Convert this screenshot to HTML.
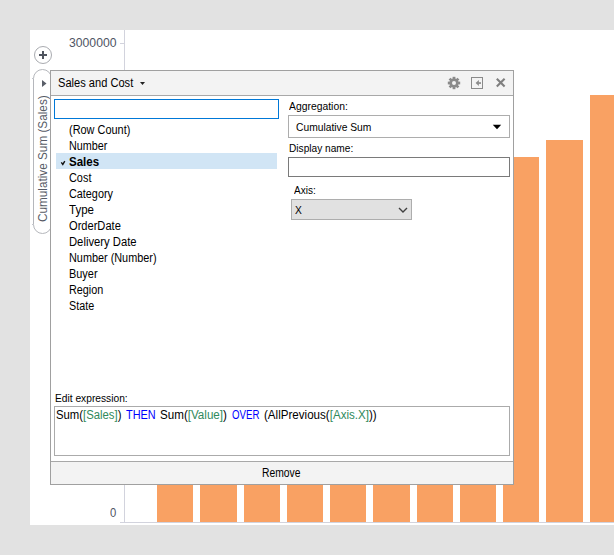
<!DOCTYPE html>
<html><head><meta charset="utf-8">
<style>
*{margin:0;padding:0;box-sizing:border-box}
html,body{width:614px;height:555px;overflow:hidden;background:#e2e2e2;font-family:"Liberation Sans",sans-serif}
.a{position:absolute}
.t{position:absolute;white-space:pre;line-height:1;transform-origin:0 0}
.bar{position:absolute;background:#f9a163;width:36px}
</style></head><body>
<div class="a" style="left:30px;top:30px;width:584px;height:495px;background:#fff"></div>
<div class="a" style="left:124px;top:30px;width:1px;height:493px;background:#d2d3dd"></div>
<div class="a" style="left:120px;top:522px;width:494px;height:1px;background:#d2d3dd"></div>
<div class="a" style="left:120px;top:43px;width:4px;height:1px;background:#d2d3dd"></div>
<div class="t" style="left:68.5px;top:37px;font-size:12.5px;color:#4f5564;transform:scaleX(0.9755);">3000000</div>
<div class="t" style="left:110.4px;top:507px;font-size:12.5px;color:#4f5564;transform:scaleX(0.9);">0</div>
<div class="bar" style="left:157px;top:300px;width:36px;height:222px"></div>
<div class="bar" style="left:200px;top:300px;width:37px;height:222px"></div>
<div class="bar" style="left:244px;top:300px;width:36px;height:222px"></div>
<div class="bar" style="left:287px;top:300px;width:36px;height:222px"></div>
<div class="bar" style="left:330px;top:300px;width:36px;height:222px"></div>
<div class="bar" style="left:373px;top:300px;width:37px;height:222px"></div>
<div class="bar" style="left:417px;top:300px;width:36px;height:222px"></div>
<div class="bar" style="left:460px;top:300px;width:36px;height:222px"></div>
<div class="bar" style="left:503px;top:157px;width:36px;height:365px"></div>
<div class="bar" style="left:546px;top:140px;width:37px;height:382px"></div>
<div class="bar" style="left:590px;top:95px;width:36px;height:427px"></div>
<div class="a" style="left:34px;top:46px;width:18px;height:18px;border:1px solid #a9abb0;border-radius:50%"></div>
<div class="a" style="left:39px;top:54px;width:8px;height:2px;background:#50555f"></div>
<div class="a" style="left:42px;top:51px;width:2px;height:8px;background:#50555f"></div>
<div class="a" style="left:33px;top:69px;width:19px;height:165px;border:1px solid #b5b7bc;border-radius:9.5px"></div>
<div class="a" style="left:32px;top:78px;width:2px;height:1px;background:#c5c7cc"></div>
<div class="a" style="left:32px;top:224px;width:2px;height:1px;background:#c5c7cc"></div>
<svg class="a" style="left:40px;top:78px" width="10" height="12"><path d="M2 2 L6.5 5.5 L2 9 Z" fill="#5a5f69"/></svg>
<div class="t" style="left:37px;top:222px;font-size:12.5px;color:#575b66;transform:rotate(-90deg) scaleX(0.94)">Cumulative Sum (Sales)</div>
<div class="a" style="left:50px;top:70px;width:464px;height:415px;border:1px solid #a0a0a0;background:#fff"></div>
<div class="a" style="left:51px;top:71px;width:462px;height:25px;background:#f3f3f3;border-bottom:1px solid #a8a8a8"></div>
<div class="t" style="left:58.3px;top:77px;font-size:12px;color:#000;transform:scaleX(0.9244);">Sales and Cost</div>
<svg class="a" style="left:138px;top:80px" width="10" height="8"><path d="M2 2 L7 2 L4.5 5 Z" fill="#222"/></svg>
<svg class="a" style="left:446px;top:75px" width="16" height="16" viewBox="0 0 16 16"><g fill="#8a8a8a"><circle cx="8" cy="8" r="4.6"/><rect x="6.6" y="1.8" width="2.8" height="12.4"/><rect x="6.6" y="1.8" width="2.8" height="12.4" transform="rotate(45 8 8)"/><rect x="6.6" y="1.8" width="2.8" height="12.4" transform="rotate(90 8 8)"/><rect x="6.6" y="1.8" width="2.8" height="12.4" transform="rotate(135 8 8)"/></g><circle cx="8" cy="8" r="2" fill="#f3f3f3"/></svg>
<div class="a" style="left:471px;top:77px;width:12px;height:12px;border:1px solid #8a8a8a"></div>
<svg class="a" style="left:471px;top:77px" width="12" height="12"><path d="M4.6 6 L7.9 2.9 L7.9 9.1 Z" fill="#8a8a8a"/><rect x="7.4" y="5.2" width="2.6" height="1.7" fill="#8a8a8a"/></svg>
<svg class="a" style="left:494px;top:76px" width="14" height="14"><path d="M2.8 2.8 L10.6 10.6 M10.6 2.8 L2.8 10.6" stroke="#7f7f7f" stroke-width="2.1"/></svg>
<div class="a" style="left:54px;top:99px;width:225px;height:20px;border:1px solid #0078d7"></div>
<div class="a" style="left:56px;top:153px;width:221px;height:16px;background:#d1e5f5"></div>
<svg class="a" style="left:59px;top:159px" width="8" height="8"><path d="M2.3 3.4 L3.8 5.4 L5.8 2.2" stroke="#111" stroke-width="1.4" fill="none"/></svg>
<div class="t" style="left:69.2px;top:124px;font-size:12px;color:#000;transform:scaleX(0.9104);">(Row Count)</div>
<div class="t" style="left:69.2px;top:140px;font-size:12px;color:#000;transform:scaleX(0.8977);">Number</div>
<div class="t" style="left:69.2px;top:156px;font-size:12px;color:#000;transform:scaleX(0.9613);font-weight:bold;">Sales</div>
<div class="t" style="left:69.2px;top:172px;font-size:12px;color:#000;transform:scaleX(0.908);">Cost</div>
<div class="t" style="left:69.2px;top:188px;font-size:12px;color:#000;transform:scaleX(0.902);">Category</div>
<div class="t" style="left:69.2px;top:204px;font-size:12px;color:#000;transform:scaleX(0.9577);">Type</div>
<div class="t" style="left:69.2px;top:220px;font-size:12px;color:#000;transform:scaleX(0.925);">OrderDate</div>
<div class="t" style="left:69.2px;top:236px;font-size:12px;color:#000;transform:scaleX(0.9375);">Delivery Date</div>
<div class="t" style="left:69.2px;top:252px;font-size:12px;color:#000;transform:scaleX(0.9052);">Number (Number)</div>
<div class="t" style="left:69.2px;top:268px;font-size:12px;color:#000;transform:scaleX(0.9097);">Buyer</div>
<div class="t" style="left:69.2px;top:284px;font-size:12px;color:#000;transform:scaleX(0.9026);">Region</div>
<div class="t" style="left:69.2px;top:300px;font-size:12px;color:#000;transform:scaleX(0.8964);">State</div>
<div class="t" style="left:288.8px;top:101px;font-size:11.5px;color:#000;transform:scaleX(0.9015);">Aggregation:</div>
<div class="a" style="left:288px;top:115px;width:222px;height:23px;border:1px solid #adadad;background:#fff"></div>
<div class="t" style="left:295.6px;top:122px;font-size:11.5px;color:#000;transform:scaleX(0.8929);">Cumulative Sum</div>
<svg class="a" style="left:492px;top:123px" width="10" height="8"><path d="M0.8 1.8 L9.2 1.8 L5 6.3 Z" fill="#000"/></svg>
<div class="t" style="left:289.3px;top:143px;font-size:11.5px;color:#000;transform:scaleX(0.8819);">Display name:</div>
<div class="a" style="left:288px;top:157px;width:222px;height:20px;border:1px solid #7a7a7a;background:#fff"></div>
<div class="t" style="left:294.2px;top:185px;font-size:11.5px;color:#000;transform:scaleX(0.8708);">Axis:</div>
<div class="a" style="left:291px;top:199px;width:121px;height:21px;border:1px solid #adadad;background:#e1e1e1"></div>
<div class="t" style="left:294.9px;top:205px;font-size:11.5px;color:#000;transform:scaleX(0.8875);">X</div>
<svg class="a" style="left:397px;top:205px" width="12" height="10"><path d="M2 3 L6 7 L10 3" stroke="#404040" stroke-width="1.35" fill="none"/></svg>
<div class="t" style="left:54.95px;top:393px;font-size:11.5px;color:#000;transform:scaleX(0.8883);">Edit expression:</div>
<div class="a" style="left:54px;top:406px;width:456px;height:50px;border:1px solid #ababab;background:#fff"></div>
<div class="t" style="left:56.2px;top:409px;font-size:12px;color:#000;transform:scaleX(0.9435);">Sum(<span style="color:#2f8a5c">[Sales]</span>)</div>
<div class="t" style="left:125.5px;top:409px;font-size:12px;color:#0000ff;transform:scaleX(0.9061);">THEN</div>
<div class="t" style="left:159.8px;top:409px;font-size:12px;color:#000;transform:scaleX(0.9681);">Sum(<span style="color:#2f8a5c">[Value]</span>)</div>
<div class="t" style="left:232.0px;top:409px;font-size:12px;color:#0000ff;transform:scaleX(0.8059);">OVER</div>
<div class="t" style="left:263.9px;top:409px;font-size:12px;color:#000;transform:scaleX(0.9658);">(AllPrevious(<span style="color:#2f8a5c">[Axis.X]</span>))</div>
<div class="a" style="left:51px;top:461px;width:462px;height:23px;background:#f3f3f3;border-top:1px solid #a8a8a8"></div>
<div class="t" style="left:261.7px;top:467px;font-size:12px;color:#000;transform:scaleX(0.86);">Remove</div>
</body></html>
